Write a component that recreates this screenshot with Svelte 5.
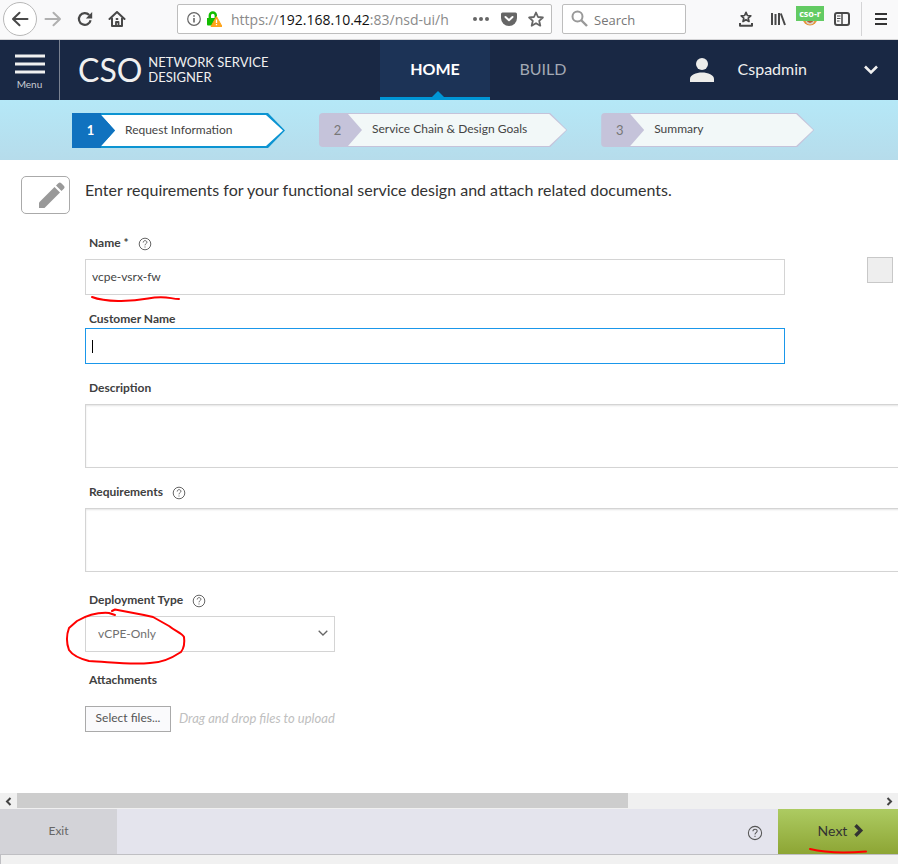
<script>
  const steps = [
    { n: 1, label: 'Request Information', active: true },
    { n: 2, label: 'Service Chain & Design Goals', active: false },
    { n: 3, label: 'Summary', active: false }
  ];
  let name = $state('vcpe-vsrx-fw');
  let customer = $state('');
  let description = $state('');
  let requirements = $state('');
  let deployment = $state('vCPE-Only');
</script>

{#snippet help(size)}
  <svg class="help" width={size} height={size} viewBox="0 0 14 14" fill="none" stroke="#555" stroke-width="0.9" role="img" aria-label="Help">
    <circle cx="7" cy="7" r="5.8" />
    <path d="M5.2 5.5C5.2 3 8.9 3.1 8.9 5.3 8.9 6.7 7 6.7 7 8.3M7 9.5v1" />
  </svg>
{/snippet}

<div class="page">
  <div class="toolbar">
    <button class="back" aria-label="Back">
      <svg width="18" height="16" viewBox="0 0 18 16" fill="none" stroke="#484848" stroke-width="2" stroke-linecap="round" stroke-linejoin="round"><path d="M16.5 8H2.5M8.500 1.800L2 8l6.500 6.200" /></svg>
    </button>
    <button class="icon forward" aria-label="Forward">
      <svg width="18" height="16" viewBox="0 0 18 16" fill="none" stroke="#b0b0b0" stroke-width="2" stroke-linecap="round" stroke-linejoin="round"><path d="M1.500 8h14M9.500 1.800L16 8l-6.500 6.200" /></svg>
    </button>
    <button class="icon reload" aria-label="Reload">
      <svg width="16" height="16" viewBox="0 0 16 16"><path d="M13.600 9.200A5.900 5.900 0 1 1 12.200 4" fill="none" stroke="#484848" stroke-width="2.200" /><path d="M15.200 1v6.500H8.800z" fill="#484848" /></svg>
    </button>
    <button class="icon home" aria-label="Home">
      <svg width="18" height="16" viewBox="0 0 18 16" fill="none" stroke="#484848" stroke-width="2" stroke-linecap="round" stroke-linejoin="round"><path d="M1.500 8L9 1l7.500 7" /><path d="M4 7.500V15h10V7.500" /><path d="M8 15v-4h2.500v4M8.500 8h1" stroke-width="1.800" /></svg>
    </button>
    <div class="address">
      <svg width="14" height="14" viewBox="0 0 14 14" fill="none" stroke="#666"><circle cx="7" cy="7" r="6.300" stroke-width="1.200" /><path d="M7 6v4.500M7 3.300v1.500" stroke-width="1.600" /></svg>
      <svg class="lock" width="15" height="16" viewBox="0 0 15 16"><path d="M2.800 7V4.500a3 3 0 0 1 6 0V8" fill="none" stroke="#12bc00" stroke-width="2.400" /><path d="M0 7h9v7.500H1a1 1 0 0 1-1-1z" fill="#12bc00" /><path d="M9.500 5.500L15 15.500H4z" fill="#ffa41c" stroke="#ffa41c" stroke-linejoin="round" /><path d="M9.500 8.500v3.500M9.500 13v1.200" stroke="#fff" stroke-width="1.300" /></svg>
      <span class="url">https://<b>192.168.10.42</b>:83/nsd-ui/h</span>
      <button aria-label="Page actions"><svg width="18" height="16" viewBox="0 0 18 16" fill="#666"><circle cx="3" cy="8" r="2" /><circle cx="9" cy="8" r="2" /><circle cx="15" cy="8" r="2" /></svg></button>
      <button aria-label="Save to Pocket"><svg width="16" height="16" viewBox="0 0 16 16"><path d="M1.500 1.500h13q1.500 0 1.500 1.500v4a8 8 0 0 1-16 0V3q0-1.500 1.500-1.500z" fill="#666" /><path d="M4.500 6L8 9.300 11.500 6" fill="none" stroke="#fff" stroke-width="2" stroke-linecap="round" stroke-linejoin="round" /></svg></button>
      <button aria-label="Bookmark this page"><svg width="16" height="16" viewBox="0 0 16 16"><path d="M8 1.500l2 4.500 4.900.5-3.700 3.300 1.100 4.900L8 12.200l-4.300 2.500 1.100-4.900L1.100 6.500 6 6z" fill="none" stroke="#666" stroke-width="1.800" stroke-linejoin="round" /></svg></button>
    </div>
    <label class="search">
      <svg width="17" height="17" viewBox="0 0 17 17" fill="none" stroke="#999" stroke-width="2"><circle cx="6.500" cy="6.500" r="5" /><path d="M10 10l6 6" stroke-width="2.400" /></svg>
      <input aria-label="Search" placeholder="Search" />
    </label>
    <div class="tools">
      <button aria-label="Bookmarks"><svg width="16" height="16" viewBox="0 0 16 16" fill="none" stroke="#484848"><path d="M8 1.300l1.400 3.200 3.400.3-2.600 2.300.8 3.400-3-1.800-3 1.800.8-3.400-2.600-2.300 3.400-.3z" stroke-width="1.700" stroke-linejoin="round" /><path d="M2 12v2.700h12V12" stroke-width="2" stroke-linejoin="round" /></svg></button>
      <button aria-label="Library"><svg width="16" height="16" viewBox="0 0 16 16" fill="none" stroke="#484848" stroke-width="2"><path d="M2 2v12M5.500 3v11M9 2v12M10.800 2.500L15 14" /></svg></button>
      <button class="profile" aria-label="Session">
        <svg width="16" height="16" viewBox="0 0 16 16"><circle cx="8" cy="7" r="7.500" fill="#e8953b" /><circle cx="8" cy="9" r="4.500" fill="#d9d2c8" /><path d="M4 9q4 6 8 0" fill="#b65c35" /></svg>
        <span>cso-r</span>
      </button>
      <button aria-label="Sidebars"><svg width="16" height="16" viewBox="0 0 16 16" fill="none" stroke="#484848"><rect x="1" y="2" width="14" height="12" rx="2" stroke-width="2" /><path d="M8 2v12" stroke-width="1.500" /><path d="M3 5h3.500M3 7.500h3.500M3 10h2.500" /></svg></button>
    </div>
    <button class="hamburger" aria-label="Open menu"><svg width="12" height="14" viewBox="0 0 12 14" stroke="#333" stroke-width="2"><path d="M0 2h12M0 7h12M0 12h12" /></svg></button>
  </div>

  <header>
    <button class="menu">
      <svg width="30" height="22" viewBox="0 0 30 22" stroke="#f0f0f0" stroke-width="3"><path d="M0 3h30M0 11h30M0 19h30" /></svg>
      <span>Menu</span>
    </button>
    <div class="brand"><span class="cso">CSO</span><span class="product">NETWORK SERVICE<br />DESIGNER</span></div>
    <nav>
      <a href="#home" class="current">HOME</a>
      <a href="#build">BUILD</a>
    </nav>
    <button class="user">
      <svg width="24" height="24" viewBox="0 0 24 24" fill="#ededeb"><circle cx="12" cy="6" r="6" /><path d="M0 24v-3c0-4 6-6.500 12-6.500S24 17 24 21v3z" /></svg>
      <span>Cspadmin</span>
      <svg width="14" height="10" viewBox="0 0 14 10" fill="none" stroke="#f0f0f0" stroke-width="2.600"><path d="M1 1.500l6 6 6-6" /></svg>
    </button>
  </header>

  <ol class="steps">
    {#each steps as s}
      <li class:active={s.active}><span class="num">{s.n}</span><span class="step-label">{s.label}</span></li>
    {/each}
  </ol>

  <main>
    <div class="intro">
      <span class="badge"><svg width="26" height="26" viewBox="0 0 26 26" fill="#999"><path d="M0 20.500L15.500 5l5.500 5.500L5.500 26H0z" /><path d="M17 3.500l2.300-2.300q1.500-1.500 3 0l2.500 2.500q1.500 1.500 0 3L22.500 9z" /></svg></span>
      <h1>Enter requirements for your functional service design and attach related documents.</h1>
    </div>

    <form>
      <div class="field">
        <label for="name">Name * {@render help(14)}</label>
        <div class="control">
          <input id="name" bind:value={name} />
          <button type="button" class="side" aria-label="Expand"></button>
          <svg class="ink ink-name" width="92" height="10" viewBox="0 0 92 10"><path d="M2 3C15 8 40 8 58 4.500S80 5 89 5" /></svg>
        </div>
      </div>
      <div class="field tight">
        <label for="customer">Customer Name</label>
        <div class="control">
          <input id="customer" class="focused" bind:value={customer} />
          <span class="caret"></span>
        </div>
      </div>
      <div class="field">
        <label for="description">Description</label>
        <textarea id="description" bind:value={description}></textarea>
      </div>
      <div class="field">
        <label for="requirements">Requirements {@render help(14)}</label>
        <textarea id="requirements" bind:value={requirements}></textarea>
      </div>
      <div class="field loose">
        <label for="deployment">Deployment Type {@render help(14)}</label>
        <div class="control select">
          <select id="deployment" bind:value={deployment}><option>vCPE-Only</option></select>
          <svg class="arrow" width="10" height="6" viewBox="0 0 10 6" fill="none" stroke="#666" stroke-width="1.300"><path d="M.7.7L5 5 9.300.7" /></svg>
          <svg class="ink ink-select" width="122" height="60" viewBox="0 0 122 60"><path d="M50 7L44 5C30 4 19 9 12 13L4 20C1 28 1 34 4 42 8 48 16 51 24 53 45 54 65 57 85 55 98 55 110 48 116 44 119 40 120 36 119 29 117 25 110 23 104 18L88 9 79 7 50 1.500 47 3" /></svg>
        </div>
      </div>
      <div class="field loose attach">
        <label for="files">Attachments</label>
        <div class="files">
          <button type="button" id="files">Select files...</button>
          <em>Drag and drop files to upload</em>
        </div>
      </div>
    </form>
  </main>

  <div class="scrollbar">
    <button aria-label="Scroll left"><svg width="7" height="9" viewBox="0 0 7 9" fill="none" stroke="#444" stroke-width="2"><path d="M5.500 1L2 4.500 5.500 8" /></svg></button>
    <div class="track"><div class="thumb"></div></div>
    <button aria-label="Scroll right"><svg width="7" height="9" viewBox="0 0 7 9" fill="none" stroke="#444" stroke-width="2"><path d="M1.500 1L5 4.500 1.500 8" /></svg></button>
  </div>

  <footer>
    <button class="exit">Exit</button>
    <button class="info" aria-label="Help">{@render help(16)}</button>
    <button class="next">
      Next
      <svg width="10" height="13" viewBox="0 0 10 13" fill="none" stroke="#333" stroke-width="3.400"><path d="M1.500 1.300l5.200 5.200-5.200 5.200" /></svg>
      <svg class="ink ink-next" width="62" height="8" viewBox="0 0 62 8"><path d="M2 2C18 6 38 6 58 4.500" /></svg>
    </button>
  </footer>
  <div class="status"></div>
</div>

<style>
  :global(body) { background: #fff; }
  .page { min-height: 100vh; display: flex; flex-direction: column; overflow: hidden; font-family: Lato, "Liberation Sans", sans-serif; color: #444; font-size: 13px; }
  .page :global(*) { box-sizing: border-box; }
  button, input, select, textarea { font: inherit; color: inherit; border: 0; background: none; margin: 0; padding: 0; border-radius: 0; outline: 0; }
  button { display: flex; align-items: center; justify-content: center; }
  svg { display: block; flex: none; }

  .toolbar { height: 40px; padding: 0 11px 2px 3px; display: flex; align-items: center; background: #f9f9fa; border-bottom: 1px solid #d4d4d6; font-family: "Open Sans", "Noto Sans", sans-serif; font-size: 14px; }
  .back { width: 34px; height: 34px; border: 1px solid #b8b8b8; border-radius: 50%; background: #fff; }
  .icon { width: 32px; height: 32px; }
  .address { margin-left: 44px; flex: 1; min-width: 0; height: 30px; border: 1px solid #bdbdbd; border-radius: 2px; background: #fff; display: flex; align-items: center; padding: 0 7px 0 9px; }
  .lock { margin-left: 6px; }
  .address button { margin-left: 11px; }
  .url { flex: 1; min-width: 0; margin: 0 0 0 9px; padding-top: 1px; color: #8a8a8a; white-space: nowrap; overflow: hidden; }
  .url b { font-weight: 400; color: #111; }
  .search { width: 124px; height: 30px; margin-left: 10px; padding: 0 8px; border: 1px solid #bdbdbd; border-radius: 2px; background: #fff; display: flex; align-items: center; gap: 6px; }
  .search input { min-width: 0; width: 100%; font-size: 13px; padding-top: 2px; }
  .search input::placeholder { color: #777; opacity: 1; }
  .tools { display: flex; gap: 16px; margin: 0 11px 0 52px; }
  .profile { position: relative; width: 16px; }
  .profile span { position: absolute; left: -6px; top: -5px; width: 28px; height: 15px; background: #63cb63; color: #fff; font: bold 9px/15px "Noto Sans", sans-serif; text-align: center; }
  .hamburger { height: 34px; padding-left: 13px; border-left: 1px solid #d4d4d6; }

  header { height: 60px; display: flex; background: #192844; color: #f0f0f0; }
  .menu { flex-direction: column; width: 60px; padding-top: 3px; border-right: 1px solid #7a8291; gap: 3px; font-size: 10px; line-height: 12px; color: #c8ccd2; }
  .brand { width: 320px; display: flex; align-items: center; gap: 6px; padding-left: 18px; }
  .cso { font-size: 32px; line-height: 40px; }
  .product { font-size: 13px; line-height: 15px; }
  nav { display: flex; font-size: 16px; }
  nav a { position: relative; min-width: 106px; padding-bottom: 3px; display: flex; align-items: center; justify-content: center; color: #a3a9b4; text-decoration: none; }
  nav a.current { min-width: 110px; background: #1c3356; color: #fff; font-weight: 700; border-bottom: 3px solid #0096d6; padding-bottom: 0; }
  nav a.current::after { content: ""; position: absolute; left: 50%; bottom: 0; margin-left: -3px; border: 6px solid transparent; border-top: 0; border-bottom-color: #0096d6; }
  .user { margin-left: auto; padding-right: 20px; font-size: 16px; }
  .user span { margin: 0 57px 0 24px; padding-bottom: 3px; }

  .steps { height: 60px; margin: 0; padding: 13px 72px 0; list-style: none; display: flex; gap: 34px; background: linear-gradient(#b5e8f7, #b6dceb); }
  .steps li { --line: #c5c3da; --fill: #f2f8f8; --edge: 1px; position: relative; height: 34px; min-width: 213px; padding-right: 40px; display: flex; align-items: center; background: var(--line); border-radius: 4px 0 0 4px; clip-path: polygon(0 0, calc(100% - 17px) 0, 100% 50%, calc(100% - 17px) 100%, 0 100%); }
  .steps li::before { content: ""; position: absolute; inset: var(--edge) var(--edge) var(--edge) 29px; background: var(--fill); clip-path: polygon(0 0, calc(100% - 17px) 0, 100% 50%, calc(100% - 17px) 100%, 0 100%, 14px 50%); }
  .steps li.active { --line: #0c94d2; --fill: #fff; --edge: 2px; height: 35px; }
  .steps li.active::after { content: ""; position: absolute; inset: 0 auto 0 0; width: 43px; background: #1072bf; clip-path: polygon(0 0, 29px 0, 29px 2px, 43px 50%, 29px calc(100% - 2px), 29px 100%, 0 100%); }
  .num { position: relative; z-index: 1; width: 37px; padding-bottom: 1px; text-align: center; color: #777; }
  .active .num { color: #fff; font-weight: 700; }
  .step-label { position: relative; margin-left: 16px; padding-bottom: 2px; white-space: nowrap; color: #444; font-size: 12px; line-height: 16px; }

  main { flex: 1; background: #fff; padding-top: 16px; overflow: hidden; }
  .intro { display: flex; align-items: center; gap: 15px; padding-left: 21px; }
  .badge { width: 49px; height: 38px; flex: none; border: 1px solid #aaa; border-radius: 5px; display: flex; align-items: center; justify-content: flex-end; padding-right: 4px; }
  h1 { margin: 0; font-size: 16px; line-height: 20px; font-weight: 400; padding-bottom: 10px; color: #333; }
  form { padding: 5px 113px 0 85px; }
  .field { margin-top: 15px; }
  .field.loose { margin-top: 19px; }
  .field label { display: flex; align-items: center; gap: 9px; height: 18px; padding: 0 0 2px 4px; margin-bottom: 7px; font-size: 12px; font-weight: 700; color: #404040; }
  .tight label { margin-bottom: 0; }
  .attach label { margin-bottom: 17px; }
  label .help { margin-top: 4px; }
  .control { position: relative; }
  .control input { width: 100%; height: 36px; display: block; border: 1px solid #d4d4d4; padding: 0 6px 2px; font-size: 12px; color: #444; background: #fff; }
  .control input.focused { border-color: #1a97ea; }
  .caret { position: absolute; left: 7px; top: 12px; width: 1px; height: 13px; background: #000; }
  .side { position: absolute; right: -108px; top: -2px; width: 26px; height: 26px; border: 1px solid #c8c8c8; background: #eee; }
  textarea { display: block; width: calc(100% + 200px); height: 64px; padding: 6px; border: 1px solid #d4d4d4; resize: none; box-shadow: inset 0 1px 2px #e4e4e4; background: #fff; }
  .select { width: 250px; }
  select { appearance: none; display: block; width: 100%; height: 36px; border: 1px solid #d4d4d4; padding: 0 12px 2px; font-size: 12px; color: #707070; background: #fff; }
  .arrow { position: absolute; right: 7px; top: 14px; pointer-events: none; }
  .ink { position: absolute; overflow: visible; fill: none; stroke: #f00; stroke-width: 2px; stroke-linecap: round; stroke-linejoin: round; pointer-events: none; }
  .ink-name { left: 5px; top: 35px; }
  .ink-select { left: -20px; top: -8px; }
  .ink-next { left: 30px; bottom: -1px; }
  .files { display: flex; align-items: center; gap: 8px; }
  .files button { width: 86px; height: 26px; border: 1px solid #aaa; background: #fafafc; font-size: 12px; color: #555; padding-bottom: 3px; }
  .files em { font-size: 13px; color: #c0c0c0; padding-bottom: 3px; }

  .scrollbar { display: flex; height: 16px; background: #f0f0f0; }
  .scrollbar button { width: 17px; }
  .track { flex: 1; padding-bottom: 1px; }
  .thumb { width: 70.7%; height: 100%; background: #cdcdcd; }

  footer { height: 45px; display: flex; background: #e4e4ed; }
  .exit { width: 117px; background: #d3d3d8; color: #666; font-size: 12px; }
  .exit, .next { padding-bottom: 2px; }
  .info { margin-left: auto; margin-right: 15px; padding-top: 3px; }
  .next { position: relative; width: 120px; gap: 7px; padding-left: 6px; background: linear-gradient(#adcb62, #8da534); color: #333; font-size: 14px; }
  .status { height: 10px; border-top: 1px solid #bfbfc3; border-left: 1px solid #bfbfc3; background: #f1f1f1; }
</style>
